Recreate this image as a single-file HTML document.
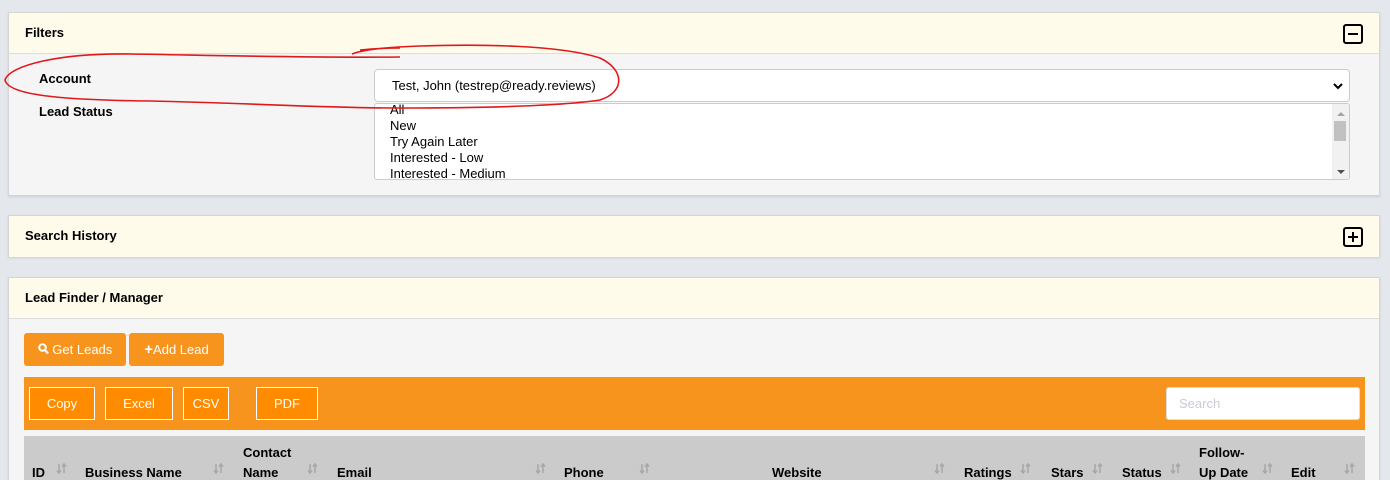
<!DOCTYPE html>
<html><head><style>
*{box-sizing:border-box;margin:0;padding:0}
html,body{width:1390px;height:480px;overflow:hidden}
body{background:#e4e7eb;font-family:"Liberation Sans",Arial,sans-serif;font-size:13px;color:#000;position:relative}
.a{position:absolute}
.panel{position:absolute;left:8px;width:1372px;background:#f5f5f5;border:1px solid #d5d5d5;box-shadow:0 1px 2px rgba(0,0,0,.1)}
.hd{background:#fffbeb;border-bottom:1px solid #ddd;height:41px;font-weight:bold;font-size:13px;padding:12px 0 0 16px}
.box{position:absolute;right:16px;top:11px;width:20px;height:20px;border:2px solid #000;border-radius:3px}
.box i{position:absolute;left:3px;right:3px;top:7px;height:2px;background:#000}
.box b{position:absolute;top:3px;bottom:3px;left:7px;width:2px;background:#000}
.ob{position:absolute;background:#f7941d;color:#fff;border-radius:3px;height:33px;line-height:33px;text-align:center;font-size:13px}
.eb{position:absolute;top:387px;height:33px;line-height:31px;border:1px solid #fff;background:#ff8c00;color:#fff;text-align:center;font-size:13px}
.th{position:absolute;font-weight:bold;font-size:13px;line-height:20px}
.s{position:absolute;top:462px}
</style></head><body>
<div class="panel" style="top:12px;height:184px">
 <div class="hd">Filters<div class="box"><i></i></div></div>
</div>
<div class="a" style="left:39px;top:71px;font-weight:bold">Account</div>
<div class="a" style="left:39px;top:104px;font-weight:bold">Lead Status</div>
<div class="a" style="left:374px;top:69px;width:976px;height:33px;background:#fff;border:1px solid #ccc;border-radius:4px;padding:8px 0 0 17px">Test, John (testrep@ready.reviews)
 <svg class="a" style="right:6px;top:12px" width="10" height="8" viewBox="0 0 10 8"><path d="M1 2 L5 6 L9 2" stroke="#000" stroke-width="2" fill="none"/></svg></div>
<div class="a" style="left:374px;top:103px;width:976px;height:77px;background:#fff;border:1px solid #ccc;border-radius:3px;overflow:hidden;padding:4px 0 0 15px;line-height:16px">
 <div style="margin-top:-6px">All<br>New<br>Try Again Later<br>Interested - Low<br>Interested - Medium</div>
 <div class="a" style="right:0;top:0;width:17px;height:77px;background:#f1f1f1"></div>
 <div class="a" style="right:3px;top:17px;width:12px;height:20px;background:#c1c1c1"></div>
 <div class="a" style="right:4px;top:8px;border:4px solid transparent;border-bottom:4px solid #a3a3a3;border-top:0"></div>
 <div class="a" style="right:4px;top:66px;border:4px solid transparent;border-top:4px solid #505050;border-bottom:0"></div>
</div>
<div class="panel" style="top:215px;height:42px"><div class="hd" style="border:0">Search History<div class="box"><i></i><b></b></div></div></div>
<div class="panel" style="top:277px;height:220px"><div class="hd">Lead Finder / Manager</div></div>
<div class="ob" style="left:24px;top:333px;width:102px"><svg width="11" height="12" viewBox="0 0 11 12" style="vertical-align:-1px"><circle cx="4.5" cy="4.5" r="3.3" stroke="#fff" stroke-width="2" fill="none"/><path d="M7 7 L10 10.5" stroke="#fff" stroke-width="2.2"/></svg> Get Leads</div>
<div class="ob" style="left:129px;top:333px;width:95px"><b style="font-size:15px">+</b>Add Lead</div>
<div class="a" style="left:24px;top:377px;width:1341px;height:53px;background:#f7941d"></div>
<div class="eb" style="left:29px;width:66px">Copy</div>
<div class="eb" style="left:105px;width:68px">Excel</div>
<div class="eb" style="left:183px;width:46px">CSV</div>
<div class="eb" style="left:256px;width:62px">PDF</div>
<div class="a" style="left:1166px;top:387px;width:194px;height:33px;background:#fff;border:1px solid #ddd;border-radius:3px;color:#c8ccd4;padding:8px 0 0 12px">Search</div>
<div class="a" style="left:24px;top:436px;width:1341px;height:50px;background:#cbcbcb"></div>
<div class="th" style="left:32px;top:463px">ID</div>
<div class="th" style="left:85px;top:463px">Business Name</div>
<div class="th" style="left:243px;top:443px">Contact<br>Name</div>
<div class="th" style="left:337px;top:463px">Email</div>
<div class="th" style="left:564px;top:463px">Phone</div>
<div class="th" style="left:772px;top:463px">Website</div>
<div class="th" style="left:964px;top:463px">Ratings</div>
<div class="th" style="left:1051px;top:463px">Stars</div>
<div class="th" style="left:1122px;top:463px">Status</div>
<div class="th" style="left:1199px;top:443px">Follow-<br>Up Date</div>
<div class="th" style="left:1291px;top:463px">Edit</div>
<svg class="a" style="left:0;top:460px" width="1390" height="20">
<defs><g id="so"><path d="M2 4 V13 M0 10.5 L2 13 L4 10.5 M7 13 V4 M5 6.5 L7 4 L9 6.5" stroke="#a8a8a8" stroke-width="1.5" fill="none"/></g></defs>
<use href="#so" x="57"/><use href="#so" x="214"/><use href="#so" x="308"/><use href="#so" x="536"/><use href="#so" x="640"/><use href="#so" x="935"/><use href="#so" x="1021"/><use href="#so" x="1093"/><use href="#so" x="1171"/><use href="#so" x="1263"/><use href="#so" x="1345"/>
</svg>
<svg class="a" style="left:0;top:0" width="700" height="120" viewBox="0 0 700 120"><path d="M400 57 C300 58 200 55 130 54 C60 53 10 65 5 80 C8 95 60 100 150 101 C250 103 320 108 400 108 C480 108 560 106 600 100 C625 92 625 70 600 58 C560 45 480 44 420 46 C390 47 365 49 352 54 M360 50 C380 48 395 48 400 48" stroke="#e0191b" stroke-width="1.6" fill="none"/></svg>
</body></html>
